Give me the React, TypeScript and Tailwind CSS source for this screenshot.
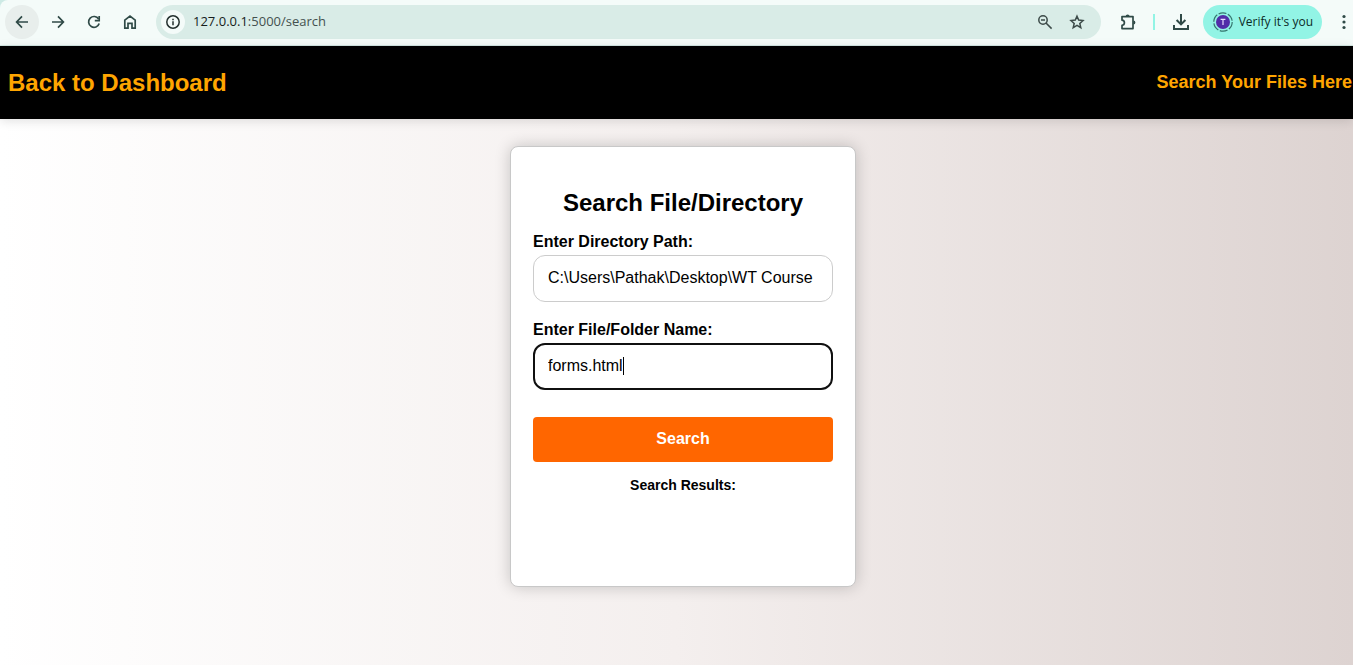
import { useState } from "react";
import type { ReactNode } from "react";

type IconProps = { size: number; children: ReactNode };

function StrokeIcon({ size, children }: IconProps) {
  return (
    <svg
      width={size}
      height={size}
      viewBox={`0 0 ${size} ${size}`}
      fill="none"
      stroke="currentColor"
      strokeWidth="1.7"
      aria-hidden="true"
      className="shrink-0"
    >
      {children}
    </svg>
  );
}

function NavButton({ label, active = false, children }: { label: string; active?: boolean; children: ReactNode }) {
  return (
    <button
      type="button"
      aria-label={label}
      className={`flex size-[34px] shrink-0 items-center justify-center rounded-full text-[#2f4a47] ${active ? "bg-[#e8eeec]" : ""}`}
    >
      {children}
    </button>
  );
}

function BrowserBar() {
  return (
    <div className="bg-[#cdeae5]">
      <div className="flex h-[46px] items-center rounded-tl-lg border-b border-[#d3e8e3] bg-[#f4fbf9] pb-px pl-[5px] font-['Open_Sans',sans-serif]">
        <div className="flex gap-0.5">
          <NavButton label="Back" active>
            <StrokeIcon size={16}>
              <path d="M14 8H3M8 2.4L2.6 8L8 13.6" />
            </StrokeIcon>
          </NavButton>
          <NavButton label="Forward">
            <StrokeIcon size={16}>
              <path d="M2 8H13M8 2.4L13.4 8L8 13.6" />
            </StrokeIcon>
          </NavButton>
          <NavButton label="Reload">
            <StrokeIcon size={16}>
              <path d="M12.6 5A5.4 5.4 0 1 0 13.2 9.5" />
              <path d="M13.2 2V6.6H8.8" />
            </StrokeIcon>
          </NavButton>
          <NavButton label="Home">
            <StrokeIcon size={16}>
              <path d="M2.8 14.2V6.2L8 2L13.2 6.2V14.2H10V9.4H6V14.2Z" />
            </StrokeIcon>
          </NavButton>
        </div>

        <div className="ml-[9px] flex h-[34px] min-w-0 flex-1 items-center rounded-full bg-[#d9ece7] pr-4 pl-[5px] text-[#3d4b49]">
          <button
            type="button"
            aria-label="Site information"
            className="flex size-6 shrink-0 items-center justify-center rounded-full bg-[#f4fbf9] text-[#23302e]"
          >
            <StrokeIcon size={16}>
              <circle cx="8" cy="8" r="6.2" strokeWidth="1.5" />
              <path d="M8 7.2V11.2M8 4.7V6.2" strokeWidth="1.5" />
            </StrokeIcon>
          </button>
          <div className="ml-2 flex-1 truncate text-[13px] text-[#44514f]">
            <span className="text-[#161d1c]">127.0.0.1</span>:5000/search
          </div>
          <div className="flex gap-4">
            <button type="button" aria-label="Zoom">
              <StrokeIcon size={16}>
                <circle cx="6" cy="6" r="4.2" strokeWidth="1.5" />
                <path d="M9 9L14.6 14.6M4 6H8" strokeWidth="1.5" />
              </StrokeIcon>
            </button>
            <button type="button" aria-label="Bookmark this page">
              <StrokeIcon size={16}>
                <path
                  d="M8 2.2L9.7 6.1L14 6.5L10.8 9.4L11.8 13.7L8 11.4L4.2 13.7L5.2 9.4L2 6.5L6.3 6.1Z"
                  strokeWidth="1.5"
                />
              </StrokeIcon>
            </button>
          </div>
        </div>

        <div className="flex shrink-0 items-center text-[#2f4a47]">
          <button type="button" aria-label="Extensions" className="ml-[18px]">
            <StrokeIcon size={18}>
              <path d="M3 3.6H14V15.6H3V12.4C6.2 12 6.2 7.6 3 7.2Z" strokeLinejoin="round" />
              <path d="M6.6 3.4A2 2 0 0 1 10.6 3.4ZM14.4 7.6A2 2 0 0 1 14.4 11.6Z" fill="currentColor" stroke="none" />
            </StrokeIcon>
          </button>
          <div className="ml-4 h-4 w-0.5 bg-[#92f4e5]" />
          <button type="button" aria-label="Downloads" className="ml-[17px]">
            <StrokeIcon size={18}>
              <path d="M9 1V11.2M4.6 7L9 11.4L13.4 7M2 12V16H16V12" strokeWidth="2" />
            </StrokeIcon>
          </button>
          <button
            type="button"
            className="ml-[13px] flex h-[34px] items-center gap-1.5 rounded-full bg-[#92f4e5] pr-[9px] pl-2.5 text-[12px] text-[#0b2b27]"
          >
            <svg width="20" height="20" viewBox="0 0 20 20" aria-hidden="true">
              <circle cx="10" cy="10" r="9.2" fill="none" stroke="#35756d" strokeWidth="1.2" strokeDasharray="8 1.63" />
              <circle cx="10" cy="10" r="7" fill="#512da8" />
              <path d="M7.6 7.4H12.4M10 7.4V13" stroke="#e6dcff" strokeWidth="1.2" />
            </svg>
            Verify it's you
          </button>
          <button type="button" aria-label="Menu" className="ml-[14px]">
            <svg width="17" height="16" viewBox="0 0 17 16" fill="currentColor" aria-hidden="true">
              <circle cx="8" cy="2.5" r="1.6" />
              <circle cx="8" cy="8" r="1.6" />
              <circle cx="8" cy="13.5" r="1.6" />
            </svg>
          </button>
        </div>
      </div>
    </div>
  );
}

export default function App() {
  const [directory, setDirectory] = useState("C:\\Users\\Pathak\\Desktop\\WT Course");
  const [fileName, setFileName] = useState("forms.html");

  return (
    <div className="flex min-h-screen flex-col font-['Liberation_Sans',Arial,sans-serif] text-black">
      <BrowserBar />
      <div className="flex flex-1 flex-col bg-linear-to-r from-white via-[#f4efee] to-[#ddd3d1]">
        <header className="flex h-[73px] items-center justify-between bg-black pl-2 font-bold text-[#ffa500] shadow-[0_2px_10px_rgba(0,0,0,0.12)]">
          <a href="#dashboard" className="text-2xl">
            Back to Dashboard
          </a>
          <span className="pr-px pb-0.5 text-lg">Search Your Files Here</span>
        </header>

        <main className="flex justify-center pt-[27px] pl-[13px]">
          <form
            onSubmit={(event) => event.preventDefault()}
            className="flex min-h-[441px] w-[346px] flex-col rounded-lg border border-[#c8c8c8] bg-white px-[22px] pt-10 shadow-[0_0_16px_rgba(0,0,0,0.2)]"
          >
            <h1 className="text-center text-2xl font-bold">Search File/Directory</h1>

            <label htmlFor="directory" className="mt-[13px] text-base leading-5 font-bold">
              Enter Directory Path:
            </label>
            <input
              id="directory"
              type="text"
              value={directory}
              onChange={(event) => setDirectory(event.target.value)}
              className="mt-[3px] h-[47px] rounded-xl border border-[#cccccc] px-[14px] pb-0.5 text-base outline-none"
            />

            <label htmlFor="file-name" className="mt-[18px] text-base leading-5 font-bold">
              Enter File/Folder Name:
            </label>
            <div className="mt-[3px] flex h-[47px] items-center rounded-xl border-2 border-[#101010] px-[13px] pb-0.5">
              <input
                id="file-name"
                type="text"
                value={fileName}
                onChange={(event) => setFileName(event.target.value)}
                className="max-w-full field-sizing-content text-base caret-transparent outline-none"
              />
              <span className="h-[18px] w-px bg-black" />
            </div>

            <button
              type="submit"
              className="mt-[27px] h-[45px] rounded bg-[#ff6600] pb-0.5 text-base font-bold text-white"
            >
              Search
            </button>

            <h2 className="mt-[13px] text-center text-sm font-bold">Search Results:</h2>
          </form>
        </main>
      </div>
    </div>
  );
}
